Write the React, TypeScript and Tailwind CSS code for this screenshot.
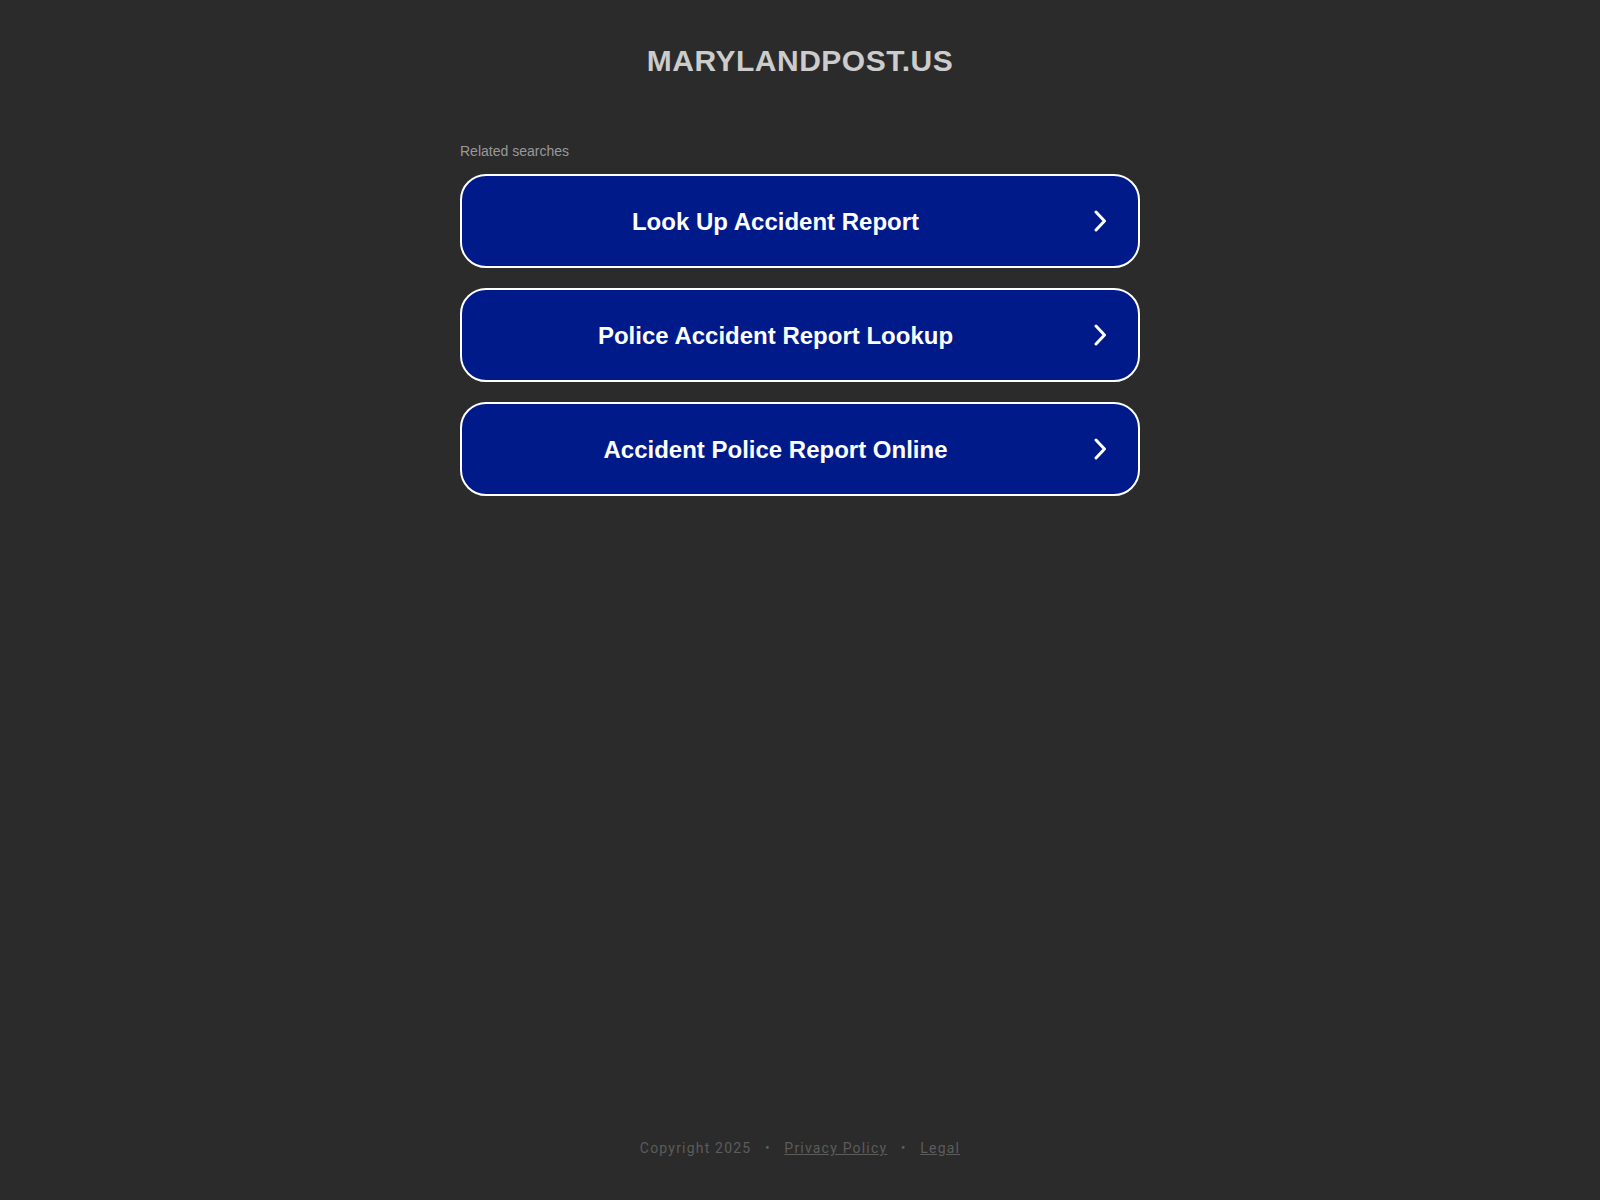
import React from "react";

const items = [
  "Look Up Accident Report",
  "Police Accident Report Lookup",
  "Accident Police Report Online",
];

function Chevron() {
  return (
    <svg width="14" height="22" viewBox="0 0 14 22" fill="none" aria-hidden="true">
      <polyline points="3,2 11.5,11 3,20" stroke="#ffffff" strokeWidth="3" strokeLinecap="round" strokeLinejoin="round" fill="none" />
    </svg>
  );
}

export default function App() {
  return (
    <div
      className="min-h-screen bg-[#2b2b2b] flex flex-col"
      style={{ fontFamily: '"Liberation Sans", Arial, sans-serif' }}
    >
      <div className="flex-1 flex flex-col items-center">
        <h1 className="mt-[43px] text-[30px] leading-[36px] font-bold tracking-[0.5px] text-[#cccccc]">
          MARYLANDPOST.US
        </h1>
        <div className="w-[680px] mt-[62px]">
          <div className="text-[14px] leading-[20px] text-[#999999]">Related searches</div>
          <div className="mt-[13px] flex flex-col gap-[20px]">
            {items.map((t) => (
              <a
                key={t}
                href="#"
                className="h-[94px] flex items-center rounded-[26px] border-2 border-white bg-[#001a8a] text-white"
              >
                <span className="flex-1 text-center text-[24px] font-bold leading-[30px] pt-[1px]">{t}</span>
                <span className="w-[49px] flex items-center justify-start pl-[4px]">
                  <Chevron />
                </span>
              </a>
            ))}
          </div>
        </div>
      </div>
      <footer
        className="pb-[42px] flex justify-center items-center text-[14px] leading-[20px] tracking-[1.2px] text-[#5c5c5c]"
        style={{ fontFamily: 'Roboto, "Liberation Sans", sans-serif' }}
      >
        <span>Copyright 2025</span>
        <span className="mx-[13.5px]">•</span>
        <a href="#" className="underline">Privacy Policy</a>
        <span className="mx-[13.5px]">•</span>
        <a href="#" className="underline">Legal</a>
      </footer>
    </div>
  );
}
